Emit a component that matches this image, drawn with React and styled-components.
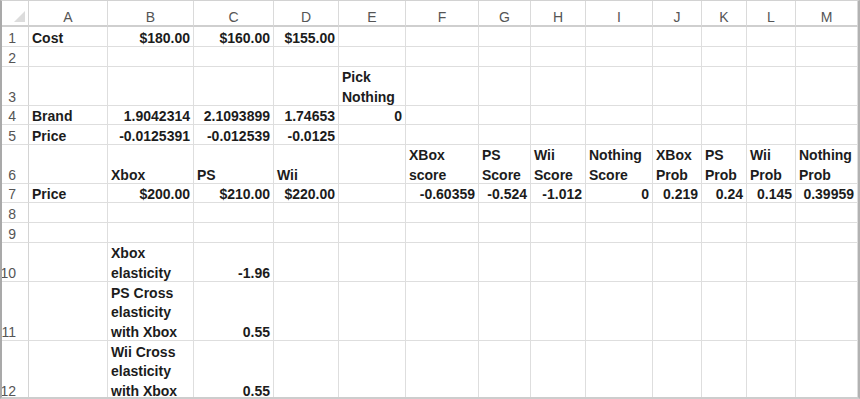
import React from "react";
import styled, { createGlobalStyle } from "styled-components";

const GlobalStyle = createGlobalStyle`
  html, body {
    margin: 0;
    padding: 0;
    background: #ffffff;
  }
  body {
    font-family: "Liberation Sans", Arial, sans-serif;
  }
`;

const COLS = [
  ["A", 79],
  ["B", 86],
  ["C", 80],
  ["D", 65],
  ["E", 67],
  ["F", 73],
  ["G", 52],
  ["H", 55],
  ["I", 67],
  ["J", 49],
  ["K", 45],
  ["L", 49],
  ["M", 62],
];

const ROWS = [
  { h: 20, cells: { A: "Cost", B: "$180.00", C: "$160.00", D: "$155.00" } },
  { h: 20, cells: {} },
  { h: 39, cells: { E: "Pick\nNothing" } },
  { h: 19, cells: { A: "Brand", B: "1.9042314", C: "2.1093899", D: "1.74653", E: "0" } },
  { h: 20, cells: { A: "Price", B: "-0.0125391", C: "-0.012539", D: "-0.0125" } },
  {
    h: 39,
    cells: {
      B: "Xbox",
      C: "PS",
      D: "Wii",
      F: "XBox\nscore",
      G: "PS\nScore",
      H: "Wii\nScore",
      I: "Nothing\nScore",
      J: "XBox\nProb",
      K: "PS\nProb",
      L: "Wii\nProb",
      M: "Nothing\nProb",
    },
  },
  {
    h: 19,
    cells: {
      A: "Price",
      B: "$200.00",
      C: "$210.00",
      D: "$220.00",
      F: "-0.60359",
      G: "-0.524",
      H: "-1.012",
      I: "0",
      J: "0.219",
      K: "0.24",
      L: "0.145",
      M: "0.39959",
    },
  },
  { h: 20, cells: {} },
  { h: 20, cells: {} },
  { h: 39, cells: { B: "Xbox\nelasticity", C: "-1.96" } },
  { h: 59, cells: { B: "PS Cross\nelasticity\nwith Xbox", C: "0.55" } },
  { h: 59, cells: { B: "Wii Cross\nelasticity\nwith Xbox", C: "0.55" } },
];

// labels sit left, numbers and money sit right, as in the sheet
const isNumber = (t) => /^[-$\d]/.test(t);

const Frame = styled.div`
  box-sizing: border-box;
  width: 860px;
  height: 399px;
  overflow: hidden;
  border-left: 2px solid #a9a9a9;
  border-top: 1px solid #d2d2d2;
  border-right: 2px solid #b2b2b2;
  border-bottom: 2px solid #cdcdcd;
  background: #ffffff;
`;

const Grid = styled.div`
  display: grid;
  grid-template-columns: 27px ${COLS.map((c) => `${c[1]}px`).join(" ")};
  grid-template-rows: 26px ${ROWS.map((r) => `${r.h}px`).join(" ")};
`;

const Corner = styled.div`
  box-sizing: border-box;
  display: flex;
  justify-content: flex-end;
  align-items: flex-end;
  padding: 0 3px 3px 0;
  border-right: 1px solid #d4d4d4;
  border-bottom: 2px solid #cfcfcf;
`;

const Triangle = styled.div`
  width: 11px;
  height: 11px;
  background: #dcdcdc;
  clip-path: polygon(100% 0, 100% 100%, 0 100%);
`;

const ColHead = styled.div`
  box-sizing: border-box;
  display: flex;
  align-items: flex-end;
  justify-content: center;
  font-size: 14px;
  line-height: 15px;
  color: #555555;
  border-right: 1px solid #dadada;
  border-bottom: 2px solid #cfcfcf;
`;

const RowHead = styled.div`
  box-sizing: border-box;
  display: flex;
  align-items: flex-end;
  justify-content: flex-end;
  padding-right: 12px;
  font-size: 14px;
  line-height: 19.5px;
  white-space: nowrap;
  color: #555555;
  border-right: 1px solid #d4d4d4;
  border-bottom: 1px solid #dedede;
`;

const Cell = styled.div`
  box-sizing: border-box;
  display: flex;
  align-items: flex-end;
  justify-content: ${(p) => (p.$right ? "flex-end" : "flex-start")};
  padding: 0 3px;
  font-size: 14px;
  font-weight: bold;
  line-height: 19.5px;
  color: #1c1c1c;
  white-space: pre-line;
  text-align: ${(p) => (p.$right ? "right" : "left")};
  border-right: 1px solid #dedede;
  border-bottom: 1px solid #dedede;
  overflow: hidden;
`;

const Text = styled.span`
  margin-bottom: -2px;
`;

export default function App() {
  return (
    <>
      <GlobalStyle />
      <Frame>
        <Grid>
          <Corner>
            <Triangle />
          </Corner>
          {COLS.map(([name]) => (
            <ColHead key={name}>{name}</ColHead>
          ))}
          {ROWS.map((row, i) => (
            <React.Fragment key={i}>
              <RowHead>
                <Text>{i + 1}</Text>
              </RowHead>
              {COLS.map(([name]) => {
                const t = row.cells[name] || "";
                return (
                  <Cell key={name} $right={isNumber(t)}>
                    {t && <Text>{t}</Text>}
                  </Cell>
                );
              })}
            </React.Fragment>
          ))}
        </Grid>
      </Frame>
    </>
  );
}
